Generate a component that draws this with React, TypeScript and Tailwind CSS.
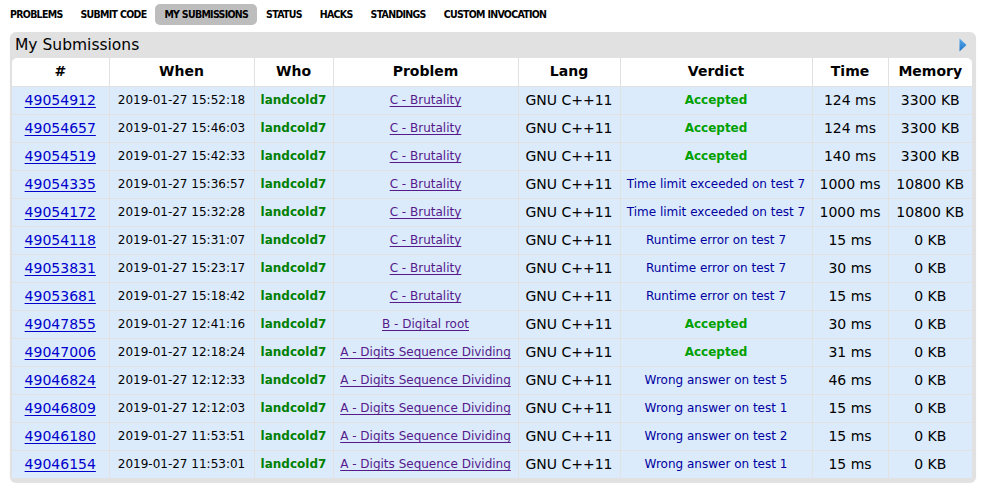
import React from 'react';

type Row = {
  id: string;
  when: string;
  problem: string;
  verdict: string;
  time: string;
  memory: string;
};

const rows: Row[] = [
  { id: '49054912', when: '2019-01-27 15:52:18', problem: 'C - Brutality', verdict: 'Accepted', time: '124 ms', memory: '3300 KB' },
  { id: '49054657', when: '2019-01-27 15:46:03', problem: 'C - Brutality', verdict: 'Accepted', time: '124 ms', memory: '3300 KB' },
  { id: '49054519', when: '2019-01-27 15:42:33', problem: 'C - Brutality', verdict: 'Accepted', time: '140 ms', memory: '3300 KB' },
  { id: '49054335', when: '2019-01-27 15:36:57', problem: 'C - Brutality', verdict: 'Time limit exceeded on test 7', time: '1000 ms', memory: '10800 KB' },
  { id: '49054172', when: '2019-01-27 15:32:28', problem: 'C - Brutality', verdict: 'Time limit exceeded on test 7', time: '1000 ms', memory: '10800 KB' },
  { id: '49054118', when: '2019-01-27 15:31:07', problem: 'C - Brutality', verdict: 'Runtime error on test 7', time: '15 ms', memory: '0 KB' },
  { id: '49053831', when: '2019-01-27 15:23:17', problem: 'C - Brutality', verdict: 'Runtime error on test 7', time: '30 ms', memory: '0 KB' },
  { id: '49053681', when: '2019-01-27 15:18:42', problem: 'C - Brutality', verdict: 'Runtime error on test 7', time: '15 ms', memory: '0 KB' },
  { id: '49047855', when: '2019-01-27 12:41:16', problem: 'B - Digital root', verdict: 'Accepted', time: '30 ms', memory: '0 KB' },
  { id: '49047006', when: '2019-01-27 12:18:24', problem: 'A - Digits Sequence Dividing', verdict: 'Accepted', time: '31 ms', memory: '0 KB' },
  { id: '49046824', when: '2019-01-27 12:12:33', problem: 'A - Digits Sequence Dividing', verdict: 'Wrong answer on test 5', time: '46 ms', memory: '0 KB' },
  { id: '49046809', when: '2019-01-27 12:12:03', problem: 'A - Digits Sequence Dividing', verdict: 'Wrong answer on test 1', time: '15 ms', memory: '0 KB' },
  { id: '49046180', when: '2019-01-27 11:53:51', problem: 'A - Digits Sequence Dividing', verdict: 'Wrong answer on test 2', time: '15 ms', memory: '0 KB' },
  { id: '49046154', when: '2019-01-27 11:53:01', problem: 'A - Digits Sequence Dividing', verdict: 'Wrong answer on test 1', time: '15 ms', memory: '0 KB' },
];

const menu = ['PROBLEMS', 'SUBMIT CODE', 'MY SUBMISSIONS', 'STATUS', 'HACKS', 'STANDINGS', 'CUSTOM INVOCATION'];

const cell = 'border border-[#e1e1e1] text-center align-middle p-0 h-[28px]';

export default function App() {
  return (
    <div className="min-h-screen bg-white text-black font-['DejaVu_Sans',Verdana,sans-serif]">
      {/* Second-level menu */}
      <ul className="flex items-center h-[28px] pl-[1px] font-['DejaVu_Sans_Condensed','DejaVu_Sans',sans-serif] font-bold text-[10.5px] tracking-[-0.7px]">
        {menu.map((m) => (
          <li
            key={m}
            className={
              m === 'MY SUBMISSIONS'
                ? 'px-[9px] h-[21px] leading-[21px] rounded-[5px] bg-[#bdbdbd]'
                : 'px-[9px] h-[21px] leading-[21px]'
            }
          >
            {m}
          </li>
        ))}
      </ul>

      {/* Submissions box */}
      <div className="ml-[10px] mt-[4px] w-[966px] rounded-[6px] bg-[#e1e1e1] pl-[2px] pr-[4px] pb-[3px] shadow-[0_1px_1px_rgba(0,0,0,0.12)]">
        <div className="flex items-center justify-between h-[26px] pl-[3px] pr-[5px]">
          <span className="text-[15.5px] leading-none pt-[1px]">My Submissions</span>
          <svg width="8" height="14" viewBox="0 0 8 14" className="mb-[1px]">
            <defs>
              <linearGradient id="tri" x1="0" y1="0" x2="0" y2="1">
                <stop offset="0" stopColor="#5aa9ec" />
                <stop offset="1" stopColor="#1f74c8" />
              </linearGradient>
            </defs>
            <path d="M0.5 0.5 L7.5 7 L0.5 13.5 Z" fill="url(#tri)" />
          </svg>
        </div>
        <table className="w-[960px] table-fixed border-collapse bg-white rounded-t-[5px] overflow-hidden">
          <colgroup>
            <col className="w-[97px]" />
            <col className="w-[145px]" />
            <col className="w-[79px]" />
            <col className="w-[185px]" />
            <col className="w-[102px]" />
            <col className="w-[192px]" />
            <col className="w-[76px]" />
            <col className="w-[84px]" />
          </colgroup>
          <thead>
            <tr className="text-[14px] font-bold">
              {['#', 'When', 'Who', 'Problem', 'Lang', 'Verdict', 'Time', 'Memory'].map((h) => (
                <th key={h} className={`${cell} border-t-0 first:border-l-0 last:border-r-0`}>
                  {h}
                </th>
              ))}
            </tr>
          </thead>
          <tbody>
            {rows.map((r) => (
              <tr key={r.id} className="bg-[#dbebfc]">
                <td className={`${cell} border-l-0 text-[14px]`}>
                  <a href="#" className="text-[#0000cc] underline underline-offset-2">{r.id}</a>
                </td>
                <td className={`${cell} text-[12px]`}>{r.when}</td>
                <td className={`${cell} text-[12px] font-bold text-[#008000]`}>landcold7</td>
                <td className={`${cell} text-[12px]`}>
                  <a href="#" className="text-[#551a8b] underline underline-offset-2">{r.problem}</a>
                </td>
                <td className={`${cell} text-[14px]`}>GNU C++11</td>
                <td className={`${cell} text-[12px]`}>
                  {r.verdict === 'Accepted' ? (
                    <span className="font-bold text-[#00a000]">Accepted</span>
                  ) : (
                    <span className="text-[#0000a0]">{r.verdict}</span>
                  )}
                </td>
                <td className={`${cell} text-[14px]`}>{r.time}</td>
                <td className={`${cell} border-r-0 text-[14px]`}>{r.memory}</td>
              </tr>
            ))}
          </tbody>
        </table>
      </div>
    </div>
  );
}
